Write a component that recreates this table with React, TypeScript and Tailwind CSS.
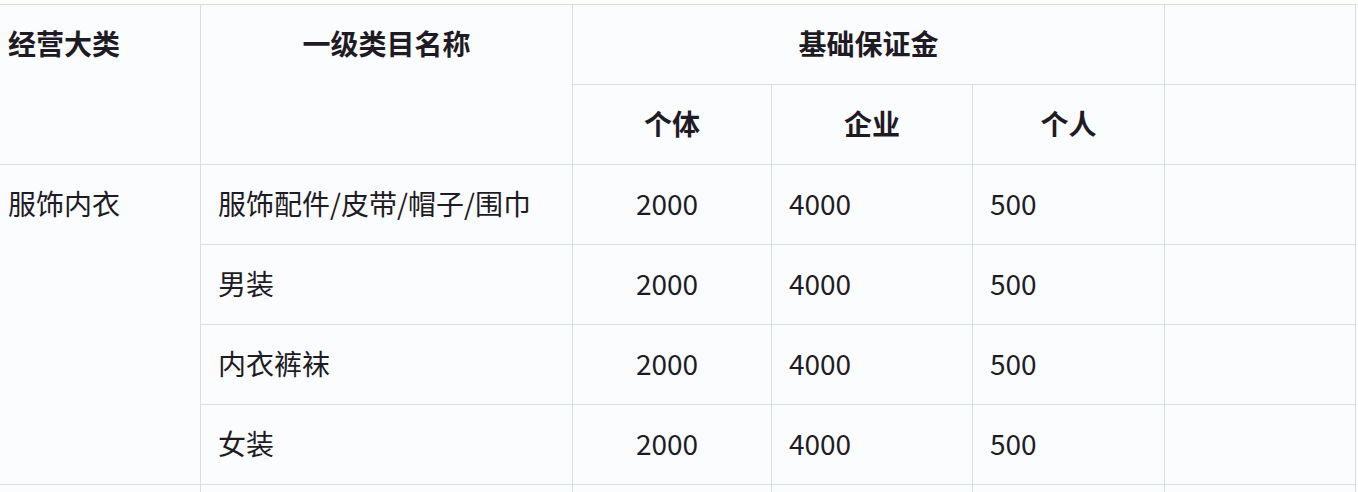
import React from "react";

const cell = "border-b border-r border-[#d8dde7] flex items-center text-[28px] leading-none text-[#1f1b24] pb-[3px]";
const head = "font-semibold";

export default function App() {
  const rows = ["服饰配件/皮带/帽子/围巾", "男装", "内衣裤袜", "女装"];
  return (
    <div className="w-[1358px] h-[492px] overflow-hidden bg-white" style={{ fontFamily: '"Noto Sans CJK SC", "Noto Sans", sans-serif' }}>
      <div className="mt-[4px] w-[1357px] border-t border-[#d8dde7] bg-[#fbfcfe] grid grid-cols-[201px_372px_199px_201px_192px_191px] auto-rows-[80px]">
        <div className={`${cell} ${head} row-span-2 items-start pl-[8px]`}>
          <div className="h-[76px] flex items-center">经营大类</div>
        </div>
        <div className={`${cell} ${head} row-span-2 items-start justify-center`}>
          <div className="h-[76px] flex items-center">一级类目名称</div>
        </div>
        <div className={`${cell} ${head} col-span-3 justify-center`}>基础保证金</div>
        <div className={cell}></div>
        <div className={`${cell} ${head} justify-center`}>个体</div>
        <div className={`${cell} ${head} justify-center`}>企业</div>
        <div className={`${cell} ${head} justify-center`}>个人</div>
        <div className={cell}></div>

        <div className={`${cell} row-span-4 items-start pl-[8px]`}>
          <div className="h-[76px] flex items-center">服饰内衣</div>
        </div>
        {rows.map((r) => (
          <React.Fragment key={r}>
            <div className={`${cell} pl-[17px]`}>{r}</div>
            <div className={`${cell} pl-[63px]`}>2000</div>
            <div className={`${cell} pl-[17px]`}>4000</div>
            <div className={`${cell} pl-[17px]`}>500</div>
            <div className={cell}></div>
          </React.Fragment>
        ))}
        <div className={cell}></div>
        <div className={cell}></div>
        <div className={cell}></div>
        <div className={cell}></div>
        <div className={cell}></div>
        <div className={cell}></div>
      </div>
    </div>
  );
}
